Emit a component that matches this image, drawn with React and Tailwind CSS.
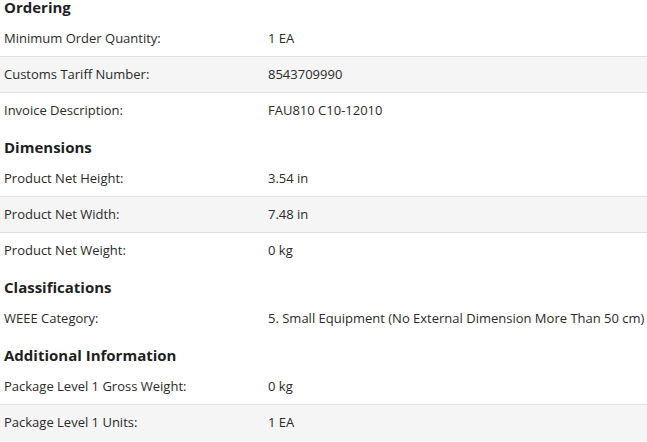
import React from "react";

const sections = [
  {
    title: "Ordering",
    rows: [
      ["Minimum Order Quantity:", "1 EA"],
      ["Customs Tariff Number:", "8543709990"],
      ["Invoice Description:", "FAU810 C10-12010"],
    ],
  },
  {
    title: "Dimensions",
    rows: [
      ["Product Net Height:", "3.54 in"],
      ["Product Net Width:", "7.48 in"],
      ["Product Net Weight:", "0 kg"],
    ],
  },
  {
    title: "Classifications",
    rows: [["WEEE Category:", "5. Small Equipment (No External Dimension More Than 50 cm)"]],
  },
  {
    title: "Additional Information",
    rows: [
      ["Package Level 1 Gross Weight:", "0 kg"],
      ["Package Level 1 Units:", "1 EA"],
    ],
  },
];

export default function App() {
  return (
    <div
      className="w-[647px] h-[442px] overflow-hidden bg-white text-[#2a2a2a]"
      style={{ fontFamily: '"Open Sans", "Noto Sans", sans-serif' }}
    >
      <div className="-mt-[11px]">
        {sections.map((s) => (
          <div key={s.title}>
            <div className="h-[32px] pt-[6px] pl-[4px] text-[15px] leading-[24px] font-bold text-[#1f1f1f]">
              {s.title}
            </div>
            <div className="divide-y divide-[#e0e0e0]">
              {s.rows.map(([k, v], i) => (
                <div
                  key={k}
                  className={`flex h-[36px] items-center text-[13px] ${i % 2 === 1 ? "bg-[#f5f5f5]" : "bg-white"}`}
                >
                  <div className="w-[268px] pl-[4px] shrink-0">{k}</div>
                  <div>{v}</div>
                </div>
              ))}
            </div>
          </div>
        ))}
      </div>
    </div>
  );
}
